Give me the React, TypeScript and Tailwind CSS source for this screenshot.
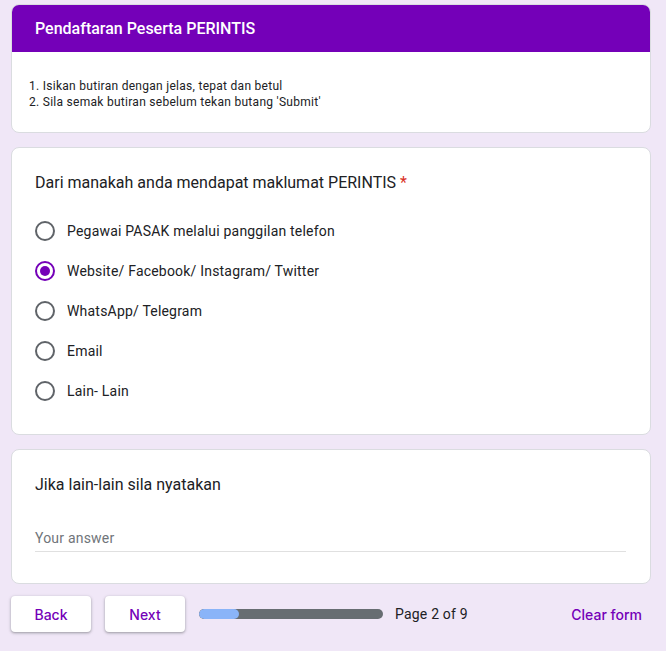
import React from "react";

const options = [
  "Pegawai PASAK melalui panggilan telefon",
  "Website/ Facebook/ Instagram/ Twitter",
  "WhatsApp/ Telegram",
  "Email",
  "Lain- Lain",
];

export default function App() {
  return (
    <div className="min-h-[651px] w-full bg-[#f0e7f7] pt-[4px] pl-[11px]">
      <div className="flex w-[640px] flex-col gap-[14px]">
        {/* Header card */}
        <div className="overflow-hidden rounded-[8px] border border-[#dadce0] bg-white">
          <div className="flex h-[47px] items-center bg-[#7400b8] px-[23px] font-['Roboto',sans-serif] text-[16px] font-medium text-white">
            Pendaftaran Peserta PERINTIS
          </div>
          <div className="px-[17px] pt-[26px] pb-[22px] font-['Roboto',sans-serif] text-[12px] leading-[16px] tracking-[0.28px] text-[#202124]">
            <div>1. Isikan butiran dengan jelas, tepat dan betul</div>
            <div>2. Sila semak butiran sebelum tekan butang 'Submit'</div>
          </div>
        </div>

        {/* Question card */}
        <div className="rounded-[8px] border border-[#dadce0] bg-white px-[23px] pt-[23px] pb-[23px]">
          <div className="font-['Roboto',sans-serif] text-[16px] leading-[24px] text-[#202124]">
            Dari manakah anda mendapat maklumat PERINTIS <span className="text-[#d93025]">*</span>
          </div>
          <div className="mt-[16px] flex flex-col">
            {options.map((o, i) => (
              <div key={o} className="flex h-[40px] items-center gap-[12px]">
                {i === 1 ? (
                  <div className="flex h-[20px] w-[20px] items-center justify-center rounded-full border-2 border-[#7400b8]">
                    <div className="h-[10px] w-[10px] rounded-full bg-[#7400b8]" />
                  </div>
                ) : (
                  <div className="h-[20px] w-[20px] rounded-full border-2 border-[#5f6368]" />
                )}
                <span className="font-['Roboto',sans-serif] text-[14px] tracking-[0.2px] text-[#202124]">{o}</span>
              </div>
            ))}
          </div>
        </div>

        {/* Other answer card */}
        <div className="rounded-[8px] border border-[#dadce0] bg-white px-[23px] pt-[23px] pb-[31px]">
          <div className="font-['Roboto',sans-serif] text-[16px] leading-[24px] text-[#202124]">
            Jika lain-lain sila nyatakan
          </div>
          <div className="mt-[31px] w-[591px] border-b border-[#e0e0e0] pb-[3px] font-['Roboto',sans-serif] text-[14px] leading-[20px] tracking-[0.2px] text-[#70757a]">
            Your answer
          </div>
        </div>
      </div>

      {/* Footer */}
      <div className="mt-[12px] flex w-[640px] items-center">
        <button className="h-[36px] w-[80px] rounded-[4px] bg-white font-['Inter',sans-serif] text-[14px] font-medium text-[#7400b8] shadow-[0_1px_2px_rgba(60,64,67,0.3),0_1px_3px_1px_rgba(60,64,67,0.15)]">
          Back
        </button>
        <button className="ml-[14px] h-[36px] w-[80px] rounded-[4px] bg-white font-['Inter',sans-serif] text-[14px] font-medium text-[#7400b8] shadow-[0_1px_2px_rgba(60,64,67,0.3),0_1px_3px_1px_rgba(60,64,67,0.15)]">
          Next
        </button>
        <div className="ml-[14px] h-[10px] w-[184px] overflow-hidden rounded-full bg-[#676d72]">
          <div className="h-full w-[40px] rounded-full bg-[#8ab4f8]" />
        </div>
        <span className="ml-[12px] font-['Roboto',sans-serif] text-[14px] tracking-[0.2px] text-[#202124]">Page 2 of 9</span>
        <span className="ml-auto mr-[9px] font-['Inter',sans-serif] text-[14px] font-medium text-[#7400b8]">Clear form</span>
      </div>
    </div>
  );
}
